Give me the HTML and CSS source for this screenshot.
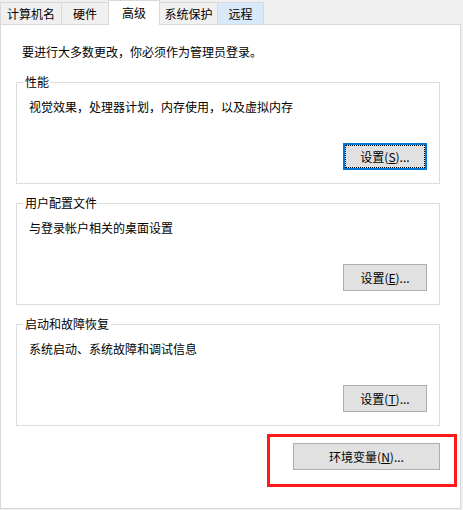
FILE: index.html
```html
<!DOCTYPE html>
<html lang="zh-CN">
<head>
<meta charset="utf-8">
<title>系统属性 - 高级</title>
<link rel="stylesheet" href="styles.css">
</head>
<body>
<div class="tabs">
  <div class="tab t1">计算机名</div>
  <div class="tab t2">硬件</div>
  <div class="tab t3 selected">高级</div>
  <div class="tab t4">系统保护</div>
  <div class="tab t5 hover">远程</div>
</div>
<div class="panel">
  <p class="intro">要进行大多数更改，你必须作为管理员登录。</p>
  <fieldset class="group g1">
    <legend>性能</legend>
    <div class="desc">视觉效果，处理器计划，内存使用，以及虚拟内存</div>
    <div class="row"><button class="btn focused">设置(<u>S</u>)...</button></div>
  </fieldset>
  <fieldset class="group g2">
    <legend>用户配置文件</legend>
    <div class="desc">与登录帐户相关的桌面设置</div>
    <div class="row"><button class="btn">设置(<u>E</u>)...</button></div>
  </fieldset>
  <fieldset class="group g3">
    <legend>启动和故障恢复</legend>
    <div class="desc">系统启动、系统故障和调试信息</div>
    <div class="row"><button class="btn">设置(<u>T</u>)...</button></div>
  </fieldset>
  <div class="row env-row"><button class="btn env">环境变量(<u>N</u>)...</button></div>
  <div class="highlight"></div>
</div>
</body>
</html>
```
FILE: styles.css
```css
html, body {
  margin: 0;
  padding: 0;
  background: #f0f0f0;
  width: 463px;
  height: 510px;
  overflow: hidden;
}
body {
  font-family: "Noto Sans CJK SC", "Microsoft YaHei", sans-serif;
  font-size: 12px;
  line-height: 16px;
  color: #000;
}
.tabs {
  display: flex;
  align-items: flex-end;
  height: 24px;
}
.tab {
  box-sizing: border-box;
  height: 22px;
  border: 1px solid #d9d9d9;
  border-bottom: none;
  background: #f0f0f0;
  display: flex;
  align-items: center;
  justify-content: center;
  margin-left: -1px;
}
.t1 { width: 62px; margin-left: 0; }
.t2 { width: 48px; }
.t3 { width: 52px; }
.t4 { width: 59px; }
.t5 { width: 47px; }
.tab.hover { background: #d8eaf9; }
.tab.selected {
  height: 25px;
  margin-bottom: -1px;
  background: #fff;
  position: relative;
  z-index: 1;
  padding-bottom: 1px;
}
.panel {
  position: relative;
  box-sizing: border-box;
  width: 461px;
  height: 485px;
  background: #fff;
  border: 1px solid #d9d9d9;
  padding: 19px 20px 0 15px;
}
.intro {
  margin: 0 0 14px 6px;
}
.group {
  margin: 0 0 11px 0;
  padding: 9px 12px 13px 6px;
  border: 1px solid #dcdcdc;
  min-width: 0;
}
.group legend {
  padding: 0 2px;
  line-height: 16px;
}
.desc {
  padding-left: 6px;
}
.row {
  display: flex;
  justify-content: flex-end;
  margin-top: 28px;
}
.btn {
  box-sizing: border-box;
  width: 84px;
  height: 27px;
  padding: 0;
  background: #e1e1e1;
  border: 1px solid #adadad;
  font-family: inherit;
  font-size: 12px;
  color: #000;
  line-height: 16px;
}
.btn u { text-underline-offset: 1px; }
.btn.focused {
  border: 2px solid #0078d7;
  outline: 1px dotted #000;
  outline-offset: -3px;
}
.env-row {
  margin-top: 17px;
}
.btn.env {
  width: 147px;
}
.highlight {
  position: absolute;
  left: 266px;
  top: 409px;
  width: 190px;
  height: 53px;
  box-sizing: border-box;
  border: 3px solid #ff1a1a;
  pointer-events: none;
}
```
